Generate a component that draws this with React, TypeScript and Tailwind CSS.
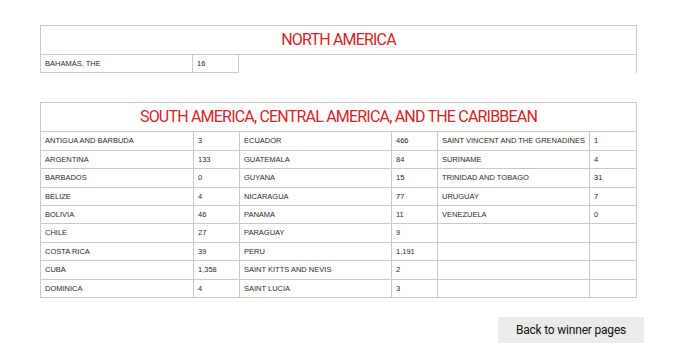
import React from 'react';

const north: [string, string][] = [['BAHAMAS, THE', '16']];

const south: [string, string][] = [
  ['ANTIGUA AND BARBUDA', '3'],
  ['ARGENTINA', '133'],
  ['BARBADOS', '0'],
  ['BELIZE', '4'],
  ['BOLIVIA', '46'],
  ['CHILE', '27'],
  ['COSTA RICA', '39'],
  ['CUBA', '1,358'],
  ['DOMINICA', '4'],
  ['ECUADOR', '466'],
  ['GUATEMALA', '84'],
  ['GUYANA', '15'],
  ['NICARAGUA', '77'],
  ['PANAMA', '11'],
  ['PARAGUAY', '9'],
  ['PERU', '1,191'],
  ['SAINT KITTS AND NEVIS', '2'],
  ['SAINT LUCIA', '3'],
  ['SAINT VINCENT AND THE GRENADINES', '1'],
  ['SURINAME', '4'],
  ['TRINIDAD AND TOBAGO', '31'],
  ['URUGUAY', '7'],
  ['VENEZUELA', '0'],
];

const headFont = { fontFamily: 'Roboto, sans-serif' };

function Cell({ children }: { children?: React.ReactNode }) {
  return (
    <div className="h-[18.4px] border-r border-b border-[#c9c9c9] px-[4px] flex items-center text-[7.5px] text-[#2a2a2a] whitespace-nowrap overflow-hidden">
      {children}
    </div>
  );
}

export default function App() {
  const rows = 9;
  const cols = [0, 1, 2].map((c) => south.slice(c * rows, c * rows + rows));

  return (
    <div className="w-[680px] h-[362px] bg-white pt-[25px] pl-[40px]" style={{ fontFamily: '"Liberation Sans", Arial, sans-serif' }}>
      {/* North America */}
      <div className="w-[597px] border-l border-t border-r border-[#c9c9c9]">
        <div className="h-[29px] border-b border-[#c9c9c9] flex items-center justify-center text-[16px] text-[#d3242b] tracking-[-0.8px]" style={headFont}>
          NORTH AMERICA
        </div>
        <div className="grid grid-cols-[153px_46px] -ml-px">
          {north.map(([name, n]) => (
            <React.Fragment key={name}>
              <div className="border-l border-[#c9c9c9]">
                <Cell>{name}</Cell>
              </div>
              <Cell>{n}</Cell>
            </React.Fragment>
          ))}
        </div>
      </div>

      {/* South America */}
      <div className="mt-[29px] w-[597px] border-l border-t border-[#c9c9c9]">
        <div className="h-[29px] border-b border-r border-[#c9c9c9] flex items-center justify-center text-[16px] text-[#d3242b] tracking-[-0.8px]" style={headFont}>
          SOUTH AMERICA, CENTRAL AMERICA, AND THE CARIBBEAN
        </div>
        <div className="grid grid-cols-[153px_46px_152px_46px_152px_47px]">
          {Array.from({ length: rows }).map((_, r) => (
            <React.Fragment key={r}>
              {cols.map((col, c) => (
                <React.Fragment key={c}>
                  <Cell>{col[r]?.[0]}</Cell>
                  <Cell>{col[r]?.[1]}</Cell>
                </React.Fragment>
              ))}
            </React.Fragment>
          ))}
        </div>
      </div>

      <div className="flex justify-end pr-[36px] mt-[19px]">
        <button className="w-[146px] h-[26px] bg-[#ebebeb] text-[12px] text-[#111] tracking-[-0.2px] flex items-center justify-center" style={headFont}>
          Back to winner pages
        </button>
      </div>
    </div>
  );
}
